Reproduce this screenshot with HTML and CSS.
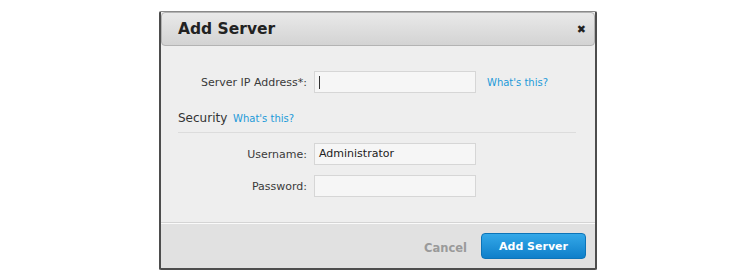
FILE: index.html
```html
<!DOCTYPE html>
<html lang="en">
<head>
  <meta charset="UTF-8">
  <title>Add Server</title>
  <link rel="stylesheet" href="styles.css">
</head>
<body>
  <div class="dialog">
    <div class="dialog-header">
      <h1>Add Server</h1>
      <span class="close">&#10006;</span>
    </div>

    <div class="dialog-body">
      <div class="form-row">
        <label class="form-label">Server IP Address*:</label>
        <div class="form-input focused"><span class="caret"></span></div>
        <a class="help-link" href="#">What's this?</a>
      </div>

      <div class="section-title">
        Security <a class="help-link" href="#">What's this?</a>
      </div>

      <div class="form-row">
        <label class="form-label">Username:</label>
        <div class="form-input">Administrator</div>
      </div>

      <div class="form-row">
        <label class="form-label">Password:</label>
        <div class="form-input"></div>
      </div>
    </div>

    <div class="dialog-footer">
      <a class="cancel" href="#">Cancel</a>
      <button class="primary">Add Server</button>
    </div>
  </div>
</body>
</html>
```

FILE: styles.css
```css
body {
  margin: 0;
  background-color: #ffffff;
  font-family: "DejaVu Sans", Verdana, sans-serif;
  color: #333;
}

.dialog {
  width: 438px;
  height: 259px;
  margin: 11px 0 0 159px;
  box-sizing: border-box;
  border: 2px solid #4d4d4d;
  border-top: 1px solid #8a8a8a;
  border-radius: 2px;
  background-color: #eeeeee;
  display: flex;
  flex-direction: column;
}

.dialog-header {
  height: 32px;
  display: flex;
  align-items: center;
  justify-content: space-between;
  padding: 0 8px 0 16px;
  background: linear-gradient(#e9e9e9, #d3d3d3);
  border: 1px solid #b3b3b3;
  border-radius: 4px;
}

.dialog-header h1 {
  margin: 0;
  font-size: 15.5px;
  font-weight: bold;
  color: #222;
}

.close {
  font-size: 11px;
  font-weight: bold;
  color: #222;
}

.dialog-body {
  flex: 1;
  padding: 25px 19px 0 17px;
}

.form-row {
  display: flex;
  align-items: center;
  margin-bottom: 10px;
}

.form-label {
  width: 129px;
  text-align: right;
  font-size: 11px;
  color: #3a3a3a;
  margin-right: 7px;
}

.form-input {
  width: 162px;
  height: 22px;
  box-sizing: border-box;
  border: 1px solid #d6d6d6;
  background-color: #f6f6f6;
  font-size: 11px;
  line-height: 20px;
  padding-left: 4px;
  color: #222;
}

.caret {
  display: inline-block;
  width: 1px;
  height: 13px;
  margin-top: 4px;
  background-color: #333;
}

.help-link {
  margin-left: 11px;
  font-size: 10px;
  color: #1c9ad9;
  text-decoration: none;
}

.section-title {
  font-size: 12px;
  color: #333;
  padding-bottom: 7px;
  margin-top: 18px;
  margin-bottom: 10px;
  border-bottom: 1px solid #dcdcdc;
}

.section-title .help-link {
  margin-left: 2px;
}

.dialog-footer {
  height: 44px;
  display: flex;
  align-items: center;
  justify-content: flex-end;
  padding: 0 9px 0 0;
  background-color: #e1e1e1;
  border-top: 1px solid #fafafa;
  box-shadow: 0 -1px 0 #d4d4d4;
}

.cancel {
  font-size: 11.5px;
  font-weight: bold;
  color: #9a9a9a;
  text-decoration: none;
  margin: 4px 14px 0 0;
}

button.primary {
  width: 105px;
  height: 26px;
  border: 1px solid #0c74b8;
  border-radius: 4px;
  background: linear-gradient(#34a8e8, #0e7fca);
  color: #ffffff;
  font-family: "DejaVu Sans", Verdana, sans-serif;
  font-size: 11px;
  font-weight: bold;
  cursor: pointer;
}
```
